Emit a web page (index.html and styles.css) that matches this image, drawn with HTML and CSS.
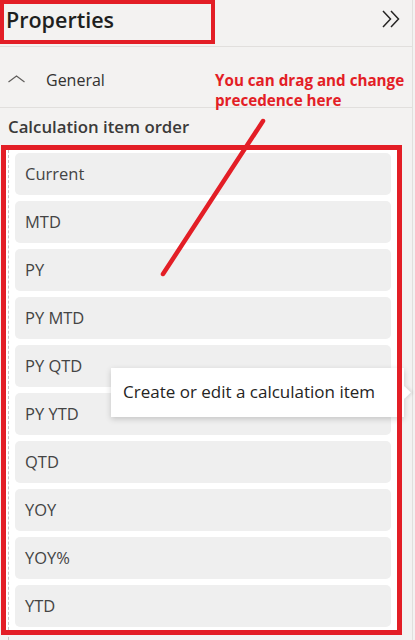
FILE: index.html
```html
<!DOCTYPE html>
<html lang="en">
<head>
<meta charset="utf-8">
<title>Properties</title>
<link rel="stylesheet" href="styles.css">
</head>
<body>
<div class="panel">
  <header class="header">
    <h1 class="title">Properties</h1>
    <svg class="collapse" width="18" height="18" viewBox="0 0 18 18" aria-hidden="true">
      <polyline points="1,1 8.5,9 1,17" fill="none" stroke="#252423" stroke-width="1.5"/>
      <polyline points="9,1 16.5,9 9,17" fill="none" stroke="#252423" stroke-width="1.5"/>
    </svg>
  </header>
  <div class="section">
    <svg class="caret" width="18" height="8" viewBox="0 0 18 8" aria-hidden="true">
      <polyline points="0.5,7 8.5,1 16.5,7" fill="none" stroke="#605e5c" stroke-width="1.2"/>
    </svg>
    <span class="section-name">General</span>
  </div>
  <div class="label">Calculation item order</div>
  <div class="list">
    <div class="item">Current</div>
    <div class="item">MTD</div>
    <div class="item">PY</div>
    <div class="item">PY MTD</div>
    <div class="item">PY QTD</div>
    <div class="item">PY YTD</div>
    <div class="item">QTD</div>
    <div class="item">YOY</div>
    <div class="item">YOY%</div>
    <div class="item">YTD</div>
    <div class="tooltip">Create or edit a calculation item</div>
  </div>
</div>
<div class="note">You can drag and change<br>precedence here</div>
<svg class="pointer" width="415" height="640" viewBox="0 0 415 640" aria-hidden="true">
  <line x1="263" y1="121" x2="163" y2="274" stroke="#e31e26" stroke-width="4.5" stroke-linecap="round"/>
</svg>
</body>
</html>
```

FILE: styles.css
```css
* { box-sizing: border-box; }

html, body {
  margin: 0;
  padding: 0;
  background: #f3f2f1;
  font-family: "Open Sans", "Noto Sans", sans-serif;
  color: #252423;
}

body {
  position: relative;
  width: 415px;
  height: 640px;
  overflow: hidden;
}

.panel {
  width: 413px;
  height: 640px;
  border-right: 1px solid #e1dfdd;
  display: flex;
  flex-direction: column;
}

.header {
  height: 47px;
  border-bottom: 1px solid #e1dfdd;
  display: flex;
  align-items: flex-start;
  justify-content: space-between;
  padding-right: 12px;
}

.title {
  margin: 0;
  width: 215px;
  height: 44px;
  border: 4px solid #e31e26;
  padding: 1px 0 0 2px;
  font-size: 21.5px;
  line-height: 30px;
  font-weight: 600;
  color: #201f1e;
}

.collapse {
  margin-top: 10px;
}

.section {
  height: 61px;
  border-bottom: 1px solid #e1dfdd;
  display: flex;
  align-items: center;
  padding: 6px 0 0 8px;
  gap: 20px;
}

.caret {
  margin-top: -2px;
}

.section-name {
  font-size: 16px;
  line-height: 22px;
  color: #323130;
}

.label {
  height: 37px;
  padding: 7px 0 0 8px;
  font-size: 16.8px;
  line-height: 24px;
  font-weight: 600;
  color: #3b3a39;
}

.list {
  position: relative;
  width: 401px;
  margin-left: 1px;
  background: #ffffff;
  padding: 8px 11px 8px 14px;
  display: flex;
  flex-direction: column;
  gap: 6px;
}

.list::before {
  content: "";
  position: absolute;
  left: 7px;
  top: 0;
  bottom: -10px;
  border-left: 1px dashed #c8c6c4;
}

.list::after {
  content: "";
  position: absolute;
  inset: 0;
  border: 5px solid #e31e26;
  z-index: 3;
  pointer-events: none;
}

.item {
  height: 42px;
  border-radius: 5px;
  background: #efefef;
  padding: 10px 0 0 10px;
  font-size: 16.5px;
  line-height: 22px;
  color: #444444;
}

.tooltip {
  position: absolute;
  left: 110px;
  top: 223px;
  width: 293px;
  height: 49px;
  background: #ffffff;
  padding: 13px 0 0 12px;
  font-size: 17px;
  line-height: 22px;
  color: #252423;
  box-shadow: 0 2px 6px rgba(0, 0, 0, 0.18);
  z-index: 2;
}

.tooltip::after {
  content: "";
  position: absolute;
  right: -5px;
  top: 20px;
  width: 9px;
  height: 9px;
  background: #ffffff;
  transform: rotate(45deg);
  box-shadow: 2px -2px 3px rgba(0, 0, 0, 0.08);
}

.note {
  position: absolute;
  left: 215px;
  top: 70px;
  font-size: 15.2px;
  line-height: 20px;
  font-weight: 700;
  color: #e31e26;
  z-index: 4;
}

.pointer {
  position: absolute;
  left: 0;
  top: 0;
  z-index: 5;
  pointer-events: none;
}
```
